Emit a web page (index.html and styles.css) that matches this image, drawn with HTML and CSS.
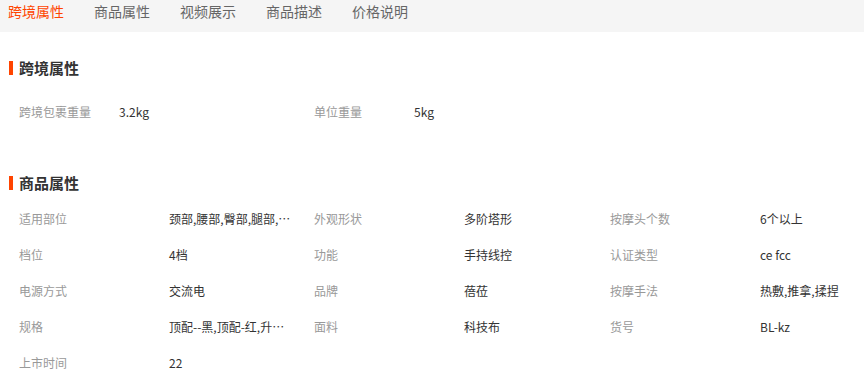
FILE: index.html
```html
<!DOCTYPE html>
<html lang="zh-CN">
<head>
<meta charset="utf-8">
<title>商品详情</title>
<link rel="stylesheet" href="styles.css">
</head>
<body>
<nav class="tabs">
  <span class="tab active">跨境属性</span>
  <span class="tab">商品属性</span>
  <span class="tab">视频展示</span>
  <span class="tab">商品描述</span>
  <span class="tab">价格说明</span>
</nav>

<section class="section cross">
  <h2 class="title">跨境属性</h2>
  <div class="grid">
    <div class="cell"><span class="label">跨境包裹重量</span><span class="value">3.2kg</span></div>
    <div class="cell"><span class="label">单位重量</span><span class="value">5kg</span></div>
  </div>
</section>

<section class="section attrs">
  <h2 class="title">商品属性</h2>
  <div class="grid">
    <div class="cell"><span class="label">适用部位</span><span class="value" title="颈部,腰部,臀部,腿部,背部">颈部,腰部,臀部,腿部,…</span></div>
    <div class="cell"><span class="label">外观形状</span><span class="value">多阶塔形</span></div>
    <div class="cell"><span class="label">按摩头个数</span><span class="value">6个以上</span></div>

    <div class="cell"><span class="label">档位</span><span class="value">4档</span></div>
    <div class="cell"><span class="label">功能</span><span class="value">手持线控</span></div>
    <div class="cell"><span class="label">认证类型</span><span class="value">ce fcc</span></div>

    <div class="cell"><span class="label">电源方式</span><span class="value">交流电</span></div>
    <div class="cell"><span class="label">品牌</span><span class="value">蓓莅</span></div>
    <div class="cell"><span class="label">按摩手法</span><span class="value">热敷,推拿,揉捏</span></div>

    <div class="cell"><span class="label">规格</span><span class="value" title="顶配--黑,顶配-红,升级款">顶配--黑,顶配-红,升…</span></div>
    <div class="cell"><span class="label">面料</span><span class="value">科技布</span></div>
    <div class="cell"><span class="label">货号</span><span class="value">BL-kz</span></div>

    <div class="cell"><span class="label">上市时间</span><span class="value">22</span></div>
  </div>
</section>
</body>
</html>
```

FILE: styles.css
```css
html, body {
  margin: 0;
  padding: 0;
  background: #fff;
  overflow: hidden;
}
body {
  font-family: "Noto Sans CJK SC", "Noto Sans", sans-serif;
  font-size: 12px;
  color: #333;
}
.tabs {
  display: flex;
  gap: 30px;
  height: 32px;
  padding-left: 8px;
  background: #f5f5f5;
  box-sizing: border-box;
}
.tab {
  font-size: 14px;
  line-height: 22px;
  color: #666;
}
.tab.active {
  color: #ff4400;
}
.section {
  padding-left: 19px;
}
.title {
  position: relative;
  margin: 0;
  font-size: 15px;
  font-weight: bold;
  line-height: 20px;
  color: #333;
}
.title::before {
  content: "";
  position: absolute;
  left: -10px;
  top: 3px;
  width: 4px;
  height: 14px;
  background: #ff4400;
}
.cross { margin-top: 26px; }
.cross .title { margin-bottom: 16px; }
.attrs { margin-top: 43px; }
.attrs .title { margin-bottom: 8px; }

.grid {
  display: grid;
  grid-template-columns: 295px 296px 1fr;
}
.cross .grid {
  grid-template-columns: 295px 1fr;
}
.cell {
  display: flex;
  line-height: 36px;
  white-space: nowrap;
}
.label {
  flex: none;
  width: 150px;
  color: #999;
}
.cross .label {
  width: 100px;
}
.value {
  color: #333;
}
```
